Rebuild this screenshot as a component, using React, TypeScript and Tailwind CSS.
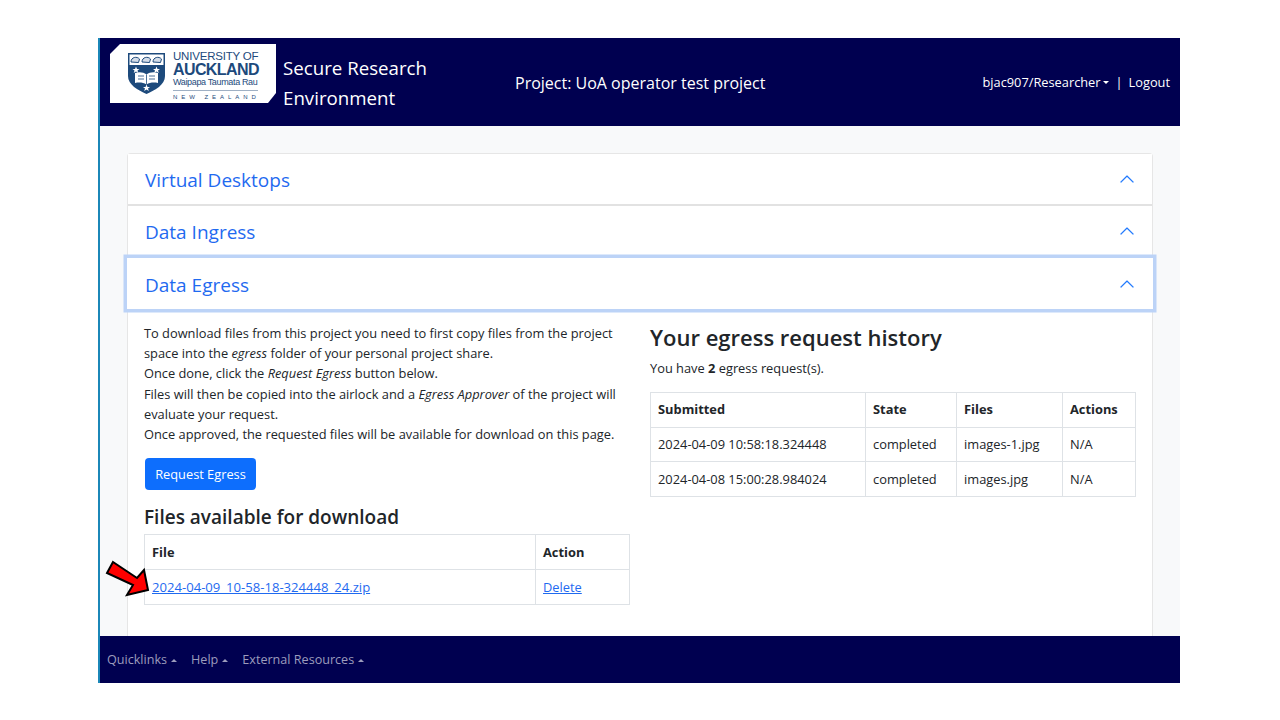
const font = { fontFamily: '"Open Sans", "Noto Sans", sans-serif' };

function Chevron() {
  return (
    <svg width="16" height="16" viewBox="0 0 16 16" fill="#0d6efd" stroke="#0d6efd" strokeWidth="0.3" className="shrink-0">
      <path fillRule="evenodd" d="M14.354 11.354a.5.5 0 0 1-.708 0L8 5.707l-5.646 5.647a.5.5 0 0 1-.708-.708l6-6a.5.5 0 0 1 .708 0l6 6a.5.5 0 0 1 0 .708z" />
    </svg>
  );
}

function Crest() {
  return (
    <svg width="37" height="41" viewBox="0 0 37 41" className="shrink-0">
      <path d="M0 0H37V23C37 32 27 37 18.500 41C10 37 0 32 0 23Z" fill="#1d4a7c" />
      <rect x="1.500" y="1.500" width="34" height="10.500" fill="#fff" />
      <path d="M3 9c0-5 6-6 8.500-3l-1 3.500zM14 9c0-5 6-6 8.500-3l-1 3.500zM25 9c0-5 6-6 8.500-3l-1 3.500z" fill="#d5dde8" stroke="#1d4a7c" strokeWidth="1" />
      <path d="M8 13.500l1 2.400h2.500l-2 1.500.8 2.500-2.300-1.500-2.300 1.500.8-2.500-2-1.500H7zM28.500 13.500l1 2.400H32l-2 1.500.8 2.500-2.300-1.500-2.300 1.500.8-2.500-2-1.500h2.500zM18.500 31.500l1 2.400H22l-2 1.500.8 2.500-2.300-1.500-2.300 1.500.8-2.500-2-1.500H17.500z" fill="#fff" />
      <path d="M7 20c4-1.500 8.500-1 11.500 1.500C21.500 19 26 18.500 30 20v10c-4-1-8.500-.5-11.500 1.500C15.500 29.500 11 29 7 30z" fill="#fff" />
      <path d="M18.500 21.500v10M10 23h6M10 26h6M21 23h6M21 26h6" stroke="#1d4a7c" strokeWidth="0.8" />
    </svg>
  );
}

function Logo() {
  return (
    <div
      className="flex h-[59px] w-[166px] shrink-0 items-center gap-[8px] bg-white pl-[18px]"
      style={{ clipPath: "polygon(10px 0, 100% 0, 100% 49px, 158px 100%, 0 100%, 0 10px)" }}
    >
      <Crest />
      <div className="flex w-[85px] flex-col pt-[3px] text-[#1d4a7c]" style={{ fontFamily: '"Liberation Sans", sans-serif' }}>
        <span className="text-[11.500px] leading-[12px] whitespace-nowrap tracking-[-0.2px]">UNIVERSITY OF</span>
        <span className="text-[16px] leading-[15px] font-bold whitespace-nowrap tracking-[-0.6px]">AUCKLAND</span>
        <span className="border-b border-[#9fb0c4] pb-[2px] text-[9px] leading-[11px] whitespace-nowrap tracking-[-0.35px]">Waipapa Taumata Rau</span>
        <span className="mt-[2px] text-[6px] leading-[8px] whitespace-nowrap tracking-[3.950px]">NEW ZEALAND</span>
      </div>
    </div>
  );
}

function AccordionRow({ title, focused }: { title: string; focused?: boolean }) {
  return (
    <div
      className={
        focused
          ? "relative z-10 -mx-px flex h-[51px] items-center justify-between bg-white pr-[18px] pl-[18px] shadow-[0_0_0_3.500px_#bcd3f7]"
          : "flex h-[52px] items-center justify-between border-b-2 border-[#e2e2e2] bg-white pr-[17px] pl-[17px]"
      }
    >
      <span className="pt-[3px] text-[19px] leading-none text-[#1f6af0]">{title}</span>
      <Chevron />
    </div>
  );
}

function Table({ head, rows, cols, className }: { head: string[]; rows: React.ReactNode[][]; cols: string; className?: string }) {
  return (
    <table className={`table-fixed border-collapse text-[12.850px] text-[#212529] ${className ?? ""}`}>
      <colgroup>
        {cols.split(" ").map((w, i) => (
          <col key={i} style={{ width: Number(w) }} />
        ))}
      </colgroup>
      <thead>
        <tr>
          {head.map((h) => (
            <th key={h} className="h-[34.700px] border border-[#dee2e6] px-[7px] text-left font-bold">{h}</th>
          ))}
        </tr>
      </thead>
      <tbody>
        {rows.map((r, i) => (
          <tr key={i}>
            {r.map((c, j) => (
              <td key={j} className="h-[34.700px] border border-[#dee2e6] px-[7px] whitespace-nowrap">{c}</td>
            ))}
          </tr>
        ))}
      </tbody>
    </table>
  );
}

function FooterLink({ label }: { label: string }) {
  return (
    <span className="flex items-center gap-[4px]">
      {label}
      <span className="h-0 w-0 border-x-[3.500px] border-b-[3.500px] border-x-transparent border-b-[#9c9cbc]" />
    </span>
  );
}

export default function App() {
  return (
    <div className="min-h-[720px] bg-white pt-[38px]" style={font}>
      <div className="ml-[98px] flex h-[645px] w-[1082px] flex-col border-l-2 border-[#1b87b8] bg-[#f8f9fa]">
        <header className="flex h-[88px] shrink-0 bg-[#000050] text-white">
          <div className="flex items-start pt-[6px] pl-[10px]">
            <Logo />
          </div>
          <div className="w-[239px] pt-[15px] pl-[7px] text-[18.700px] leading-[30px]">
            Secure Research
            <br />
            Environment
          </div>
          <div className="pt-[33px] text-[16px] leading-[24px] whitespace-nowrap">Project: UoA operator test project</div>
          <div className="ml-auto flex items-center pt-[1px] pr-[10px] text-[12.800px] whitespace-nowrap">
            <span className="flex items-center gap-[2px]">
              bjac907/Researcher
              <span className="h-0 w-0 border-x-[3.500px] border-t-[3.500px] border-x-transparent border-t-white" />
            </span>
            <span className="mr-[6px] ml-[7px]">|</span>
            <span>Logout</span>
          </div>
        </header>

        <main className="min-h-0 flex-1 overflow-hidden px-[27px] pt-[27px]">
          <div className="h-full rounded-t-[4px] border border-b-0 border-[#e6e6e6] bg-white">
            <AccordionRow title="Virtual Desktops" />
            <AccordionRow title="Data Ingress" />
            <AccordionRow title="Data Egress" focused />
            <div className="flex gap-[20px] pt-[14px] pr-[16px] pl-[16px]">
              <div className="w-[486px] shrink-0 text-[12.840px] leading-[20.200px] text-[#212529]">
                <p>
                  To download files from this project you need to first copy files from the project space into the <i>egress</i> folder of your personal project share.
                  <br />
                  Once done, click the <i>Request Egress</i> button below.
                  <br />
                  Files will then be copied into the airlock and a <i>Egress Approver</i> of the project will evaluate your request.
                  <br />
                  Once approved, the requested files will be available for download on this page.
                </p>
                <button className="mt-[14px] ml-px block h-[32px] w-[111px] rounded-[4px] bg-[#0d6efd] text-[12.800px] text-white">Request Egress</button>
                <h3 className="mt-[12px] mb-[2px] text-[19px] leading-[30px] font-semibold">Files available for download</h3>
                <Table
                  head={["File", "Action"]}
                  cols="391 94"
                  className="w-[485px]"
                  rows={[[
                    <a className="text-[13.100px] text-[#1f6af0] underline">2024-04-09_10-58-18-324448_24.zip</a>,
                    <a className="text-[#1f6af0] underline">Delete</a>,
                  ]]}
                />
              </div>
              <div className="w-[485px] text-[12.840px] text-[#212529]">
                <h2 className="-mt-px text-[22px] leading-[30px] font-semibold">Your egress request history</h2>
                <p className="mt-[6px] leading-[21px]">
                  You have <b>2</b> egress request(s).
                </p>
                <Table
                  className="mt-[13px] w-[485px]"
                  head={["Submitted", "State", "Files", "Actions"]}
                  cols="215 91 106 73"
                  rows={[
                    ["2024-04-09 10:58:18.324448", "completed", "images-1.jpg", "N/A"],
                    ["2024-04-08 15:00:28.984024", "completed", "images.jpg", "N/A"],
                  ]}
                />
              </div>
            </div>
          </div>
        </main>

        <footer className="flex h-[47px] shrink-0 items-center gap-[14px] bg-[#000050] pt-[2px] pl-[7px] text-[12.600px] text-[#9c9cbc]">
          <FooterLink label="Quicklinks" />
          <FooterLink label="Help" />
          <FooterLink label="External Resources" />
        </footer>
      </div>
      <svg className="absolute top-[560px] left-[105px]" width="46" height="38" viewBox="0 0 46 38">
        <path d="M8 2L32 18L39 10L43 30L22 35L28 25L2 13Z" fill="#f00" stroke="#000" strokeWidth="2" />
      </svg>
    </div>
  );
}
